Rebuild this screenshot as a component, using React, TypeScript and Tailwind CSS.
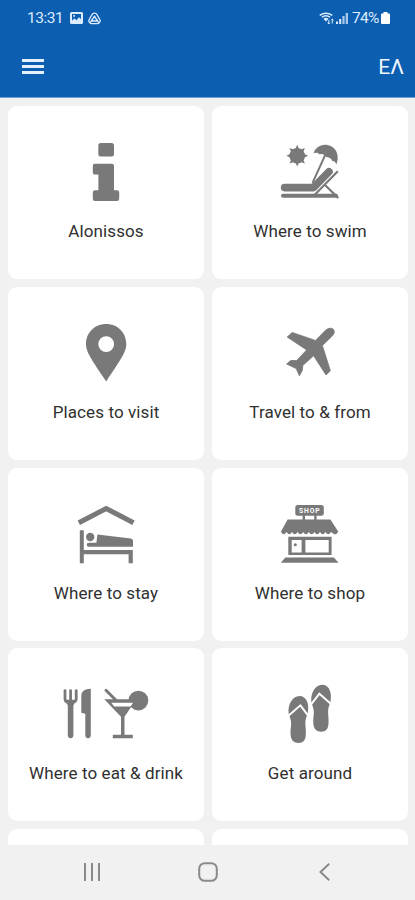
import type { ReactNode } from 'react';

type Tile = { label: string; viewBox: string; icon: ReactNode };

const tiles: Tile[] = [
  {
    label: 'Alonissos',
    viewBox: '56 130 100 80',
    icon: (
      <>
        <rect x="98.3" y="143" width="15.7" height="13.4" rx="2.5" />
        <path d="M94.7 163.7H111.8Q114 163.7 114 166V190.3H117Q119.2 190.3 119.2 192.5V198.7Q119.2 200.9 117 200.9H95Q92.8 200.9 92.8 198.7V192.5Q92.8 190.3 95 190.3H98.4V174.6H95Q92.8 174.6 92.8 172.4V166Q92.8 163.7 94.7 163.7Z" />
      </>
    ),
  },
  {
    label: 'Where to swim',
    viewBox: '260 130 100 80',
    icon: (
      <>
        <circle cx="297.2" cy="155.8" r="7.8" />
        <path d="M297.2 144.8l2.2 5.3 5.5-2.2-2.2 5.3 5.4 2.6-5.4 2.4 2.2 5.4-5.5-2.2-2.2 5.2-2.3-5.2-5.4 2.2 2.2-5.4-5.3-2.4 5.3-2.6-2.2-5.3 5.4 2.2z" />
        <path d="M313.6 153.4C315 148 320 144.4 326 144.8C335 145.5 340.5 154.5 336.4 164.4C335.4 161.8 334.2 160.8 332.2 161C331.8 158.7 329.6 157.2 326.3 157C324.5 154.5 322 153.4 319.8 154.4C318 152.5 315.5 152.3 313.6 153.4Z" />
        <path d="M325.2 155L312.5 183" fill="none" stroke="currentColor" strokeWidth="1.9" />
        <path d="M284.6 187.6H313.5L329 171.7" fill="none" stroke="currentColor" strokeWidth="7.6" strokeLinecap="round" strokeLinejoin="round" />
        <path d="M283 195.7H336" fill="none" stroke="currentColor" strokeWidth="4" strokeLinecap="round" />
        <path d="M337.8 171.3L315 194.5M325 185L338.3 198" fill="none" stroke="currentColor" strokeWidth="2.2" />
      </>
    ),
  },
  {
    label: 'Places to visit',
    viewBox: '56 310.75 100 80',
    icon: (
      <path
        fillRule="evenodd"
        d="M106.2 323.7C117.5 323.7 126.3 332.3 126.3 343.8C126.3 351 122.3 357.2 106.2 381.2C90 357.2 86 351 86 343.8C86 332.3 94.8 323.7 106.2 323.7ZM106.2 335.9A7.9 7.9 0 1 0 106.2 351.7A7.9 7.9 0 1 0 106.2 335.9Z"
      />
    ),
  },
  {
    label: 'Travel to & from',
    viewBox: '260 310.75 100 80',
    icon: (
      <path stroke="currentColor" strokeWidth="0.8" strokeLinejoin="round" d="M292.2 332.2L315.5 340.2L325.3 330.2C328.5 327.2 332.2 327.6 333.5 329.2C334.8 331 334.6 333.6 332 336L322.4 345.3L330.4 370.6L326 374.7L313.6 355.5L302.8 365.2L302.4 370L299.4 375.6L296.2 368.3L286.6 363.8L290.6 360.3L296.8 360.2L306.6 349.7L287.2 336.8Z" />
    ),
  },
  {
    label: 'Where to stay',
    viewBox: '56 491.5 100 80',
    icon: (
      <>
        <path d="M78.8 522.3L106.2 508L133.5 522.3" fill="none" stroke="currentColor" strokeWidth="5" />
        <path d="M79.8 529.8H83.8V549.6H132.8V562.8H128.6V553.8H83.8V562.8H79.8Z" />
        <circle cx="90.2" cy="536.5" r="4.2" />
        <path d="M97.4 534L130.8 538Q133 538.4 133 540.4V546.2H89Q86.7 546.2 86.7 544.2Q86.7 542.2 89 542.2H96.4Z" />
      </>
    ),
  },
  {
    label: 'Where to shop',
    viewBox: '260 491.5 100 80',
    icon: (
      <>
        <rect x="295.3" y="504.6" width="28.5" height="10.6" rx="2.5" />
        <path d="M303.8 514V520M315.4 514V520" fill="none" stroke="currentColor" strokeWidth="2.4" />
        <text x="309.8" y="512.2" textAnchor="middle" fontSize="6.8" fontWeight="700" letterSpacing="0.9" fill="#fff" className="font-[Roboto,sans-serif]">
          SHOP
        </text>
        <path d="M287.6 519H330.4L338.2 531Q336.5 534.8 333.8 533.5L331 531.6Q328.3 536 325.5 531.6Q322.7 536 320 531.6Q317.2 536 314.4 531.6Q311.6 536 308.8 531.6Q306 536 303.2 531.6Q300.4 536 297.6 531.6Q294.9 536 292 531.6Q289.3 536 286.5 531.6L284.6 533.5Q282 534.3 281 531Z" />
        <path fillRule="evenodd" d="M288.3 536.2H331.6V554.6H288.3ZM291.7 539.4V551.9H301.6V539.4ZM305.4 539.4V551.9H328.7V539.4Z" />
        <circle cx="295.3" cy="544.3" r="1.5" />
        <path d="M285.4 557H333.8L338.6 562.2H280.8Z" />
      </>
    ),
  },
  {
    label: 'Where to eat & drink',
    viewBox: '56 672.25 100 80',
    icon: (
      <>
        <path d="M65 690.8V699.5Q65.5 703 70.6 703Q76 703 76.2 699.5V690.8M70.6 690.8V703" fill="none" stroke="currentColor" strokeWidth="2.8" strokeLinecap="round" />
        <path d="M65.5 700H75.7L73.4 706V735.5Q73.2 738.4 70.6 738.4Q68 738.4 67.8 735.5V706Z" />
        <path d="M81.3 713V696Q81.5 689 90.8 689V735.5Q90.6 738.4 88 738.4Q85.5 738.4 85.3 735.5V714Z" />
        <circle cx="138.4" cy="700.8" r="9.9" />
        <path d="M106 690.5L116.5 701" fill="none" stroke="currentColor" strokeWidth="3" strokeLinecap="round" />
        <path d="M104.3 699.5H136.4L124.5 717V735H132.8V738.4H112.8V735H121V717Z" />
        <path d="M111.3 702.9H133L130.6 706.7H114.2Z" fill="#fff" />
      </>
    ),
  },
  {
    label: 'Get around',
    viewBox: '260 672.25 100 80',
    icon: (
      <>
        <path id="sandal" d="M288.6 713.5C287.8 705 292.2 696.2 299.5 696.2C306.5 696.2 309.7 704.5 307.7 713.5L306 718.5C304.5 724 306.3 728 305.8 735C305.5 740.7 303.2 743.2 298.6 743.2C293.8 743.2 291 740.5 290.6 735C290.2 728 292.2 724 290.3 718.8Z" />
        <path d="M288.4 715.9L300.4 705.6L307.8 715.4" fill="none" stroke="#fff" strokeWidth="2" />
        <use href="#sandal" x="22.7" y="-11.2" />
        <path d="M311.1 704.6L319.4 694L331 704.2" fill="none" stroke="#fff" strokeWidth="2" />
      </>
    ),
  },
  { label: '', viewBox: '56 853 100 80', icon: null },
  { label: '', viewBox: '260 853 100 80', icon: null },
];

function StatusBar() {
  return (
    <div className="flex h-[36px] items-center justify-between pl-[27px] pr-[25px] text-[#dcecff]">
      <div className="flex items-center">
        <span className="w-[43px] pt-[1px] text-[15.5px] leading-none tracking-[-0.45px]">13:31</span>
        <svg className="h-[12px] w-[13px]" viewBox="0 0 13 12">
          <path fill="currentColor" fillRule="evenodd" d="M1.5 0H11.5Q13 0 13 1.5V10.5Q13 12 11.5 12H1.5Q0 12 0 10.5V1.5Q0 0 1.5 0ZM2 2V8.7L4.4 6.3 6.3 8.2 9 5.3 11 7.2V2ZM3.3 3H5V4.7H3.3Z" />
        </svg>
        <svg className="ml-[5px] h-[13px] w-[13px]" viewBox="0 0 13 13" fill="none" stroke="currentColor" strokeWidth="1.3">
          <path d="M4 2.6A2.8 2.8 0 0 1 9 2.6L11.9 7.7A2.8 2.8 0 0 1 9.5 11.6H3.5A2.8 2.8 0 0 1 1.1 7.7Z" />
          <path d="M6.5 4.2L9.3 9H3.7Z" strokeLinejoin="round" />
          <path d="M4.6 6.8L2 11M8.4 6.8L11 11" />
        </svg>
      </div>
      <div className="flex items-center">
        <svg className="h-[13px] w-[16px]" viewBox="0 0 16 13" fill="none" stroke="currentColor">
          <path d="M.7 3.3Q7 -1 13.3 3.3M3 5.2Q7 2.2 11 5.2" strokeWidth="1.5" />
          <path d="M4.4 6.7Q7 5 9.6 6.7L7 9.5Z" fill="currentColor" stroke="none" />
          <path d="M9.8 8V12M8.6 10.7L9.8 12L11 10.7M13.3 11.5V7M12.2 8.2L13.3 7L14.5 8.2" strokeWidth="1" />
        </svg>
        <svg className="ml-[1px] mr-[4px] h-[12px] w-[12px]" viewBox="0 0 12 12" fill="currentColor">
          <path d="M0 9.5H2V12H0ZM3.2 7H5.2V12H3.2Z" />
          <path opacity=".75" d="M6.4 4H8.6V12H6.4ZM9.7 1H12V12H9.7Z" />
        </svg>
        <span className="w-[29px] pt-[1px] text-[15.5px] leading-none tracking-[-0.7px]">74%</span>
        <svg className="h-[12px] w-[9px]" viewBox="0 0 9 12" fill="#fff">
          <path d="M2.5 0H6.5V1.5H8Q9 1.5 9 2.5V11Q9 12 8 12H1Q0 12 0 11V2.5Q0 1.5 1 1.5H2.5Z" />
        </svg>
      </div>
    </div>
  );
}

export default function App() {
  return (
    <div className="flex h-[900px] w-[415px] flex-col overflow-hidden bg-[#f1f1f2] font-[Roboto,sans-serif]">
      <header className="h-[98px] shrink-0 border-b border-[#6f9fd2] bg-[#0c5eb0]">
        <StatusBar />
        <div className="flex h-[61px] items-center justify-between pl-[22px] pr-[11px]">
          <svg className="h-[15px] w-[22px]" viewBox="0 0 22 15" fill="#e4f0fc">
            <path d="M0 0H22V3H0ZM0 6H22V9H0ZM0 12H22V15H0Z" />
          </svg>
          <span className="pt-[1px] text-[21px] leading-none text-[#f0f7ff]">ΕΛ</span>
        </div>
      </header>
      <main className="min-h-0 flex-1 overflow-hidden px-[8px] pt-[8px]">
        <div className="grid grid-cols-[196px_196px] gap-x-[8px] gap-y-[7.75px]">
          {tiles.map((tile, i) => (
            <div key={i} className="flex h-[173px] flex-col items-center rounded-[9px] bg-white pt-[24px]">
              <svg className="h-[80px] w-[100px] shrink-0 text-[#797979]" viewBox={tile.viewBox} fill="currentColor">
                {tile.icon}
              </svg>
              <span className="mt-[9px] whitespace-nowrap text-[17px] leading-[24px] tracking-[0.1px] text-[#303030]">{tile.label}</span>
            </div>
          ))}
        </div>
      </main>
      <nav className="h-[55px] shrink-0 bg-[#f1f1f1] pl-[83px] pr-[85px]">
        <div className="flex h-[54px] items-center justify-between text-[#8a8a8a]">
          <svg className="h-[18px] w-[18px]" viewBox="0 0 18 18" fill="none" stroke="currentColor" strokeWidth="2">
            <path d="M2 0V18M9 0V18M16 0V18" />
          </svg>
          <svg className="mr-[4px] h-[20px] w-[20px]" viewBox="0 0 20 20" fill="none" stroke="currentColor" strokeWidth="2">
            <rect x="1.2" y="1.2" width="17.6" height="17.6" rx="5.5" />
          </svg>
          <svg className="h-[18px] w-[11px]" viewBox="0 0 11 18" fill="none" stroke="currentColor" strokeWidth="2">
            <path d="M10.2 .8L1.5 9L10.2 17.2" />
          </svg>
        </div>
      </nav>
    </div>
  );
}
